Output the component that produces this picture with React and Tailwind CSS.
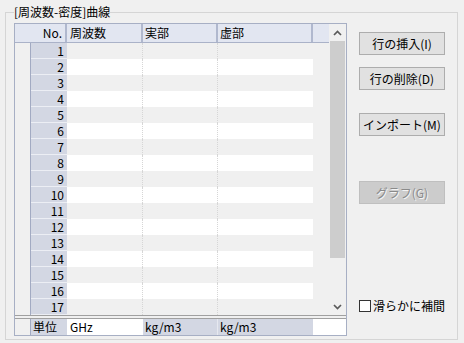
import React from "react";

const font = "font-['Noto_Sans_CJK_JP','Noto_Sans',sans-serif]";

function Up() {
  return (
    <svg width="9" height="6" viewBox="0 0 9 6">
      <path d="M1 5 L4.5 1.5 L8 5" stroke="#5a5a5a" strokeWidth="1.7" fill="none" />
    </svg>
  );
}
function Down() {
  return (
    <svg width="9" height="6" viewBox="0 0 9 6">
      <path d="M1 1 L4.5 4.5 L8 1" stroke="#5a5a5a" strokeWidth="1.7" fill="none" />
    </svg>
  );
}

function Row({ n }) {
  const bg = n % 2 === 1 ? "bg-[#f0f0f0]" : "bg-white";
  return (
    <div className="flex h-4 shrink-0">
      <div className="w-4 border-r border-[#a2aac2]" />
      <div className="w-[36px] bg-[#d3d7e3] border-b border-[#eceef4] text-right pr-[3px] text-[12px] leading-[15px] text-black">
        {n}
      </div>
      <div className={`w-[76px] border-r border-dotted border-[#d6d6d6] ${bg}`} />
      <div className={`w-[75px] border-r border-dotted border-[#d6d6d6] ${bg}`} />
      <div className={`w-[95px] ${bg}`} />
      <div className="w-4" />
    </div>
  );
}

function Btn({ children, disabled }) {
  return (
    <div
      className={
        disabled
          ? "w-[86px] h-[23px] border border-[#bfbfbf] bg-[#cccccc] flex items-center justify-center text-[12px] text-[#8a8a8a] [text-shadow:1px_1px_0_#f4f4f4]"
          : "w-[86px] h-[23px] border border-[#adadad] bg-[#e1e1e1] flex items-center justify-center text-[12px] text-black"
      }
    >
      {children}
    </div>
  );
}

export default function App() {
  const rows = Array.from({ length: 17 }, (_, i) => i + 1);
  return (
    <div className={`w-[464px] h-[343px] bg-[#f0f0f0] overflow-hidden ${font}`}>
      <div className="ml-[5px] mt-[12px] w-[453px] h-[328px] border border-[#d5d5d5] relative">
        <span className="absolute left-[8px] top-[-8px] bg-[#f0f0f0] text-[12px] leading-[14px] text-black">
          [周波数-密度]曲線
        </span>
        <div className="flex pt-[10px] pl-[8px]">
          {/* grid */}
          <div className="w-[333px] h-[313px] border border-[#a7afc4] flex flex-col bg-[#f0f0f0]">
            <div className="flex h-[291px]">
              <div className="w-[314px] flex flex-col">
                <div className="flex h-[19px] shrink-0 bg-[#e2e6f1] border-b border-[#aab2c8] text-[12px] leading-[18px] text-black">
                  <div className="w-[52px] border-r-2 border-[#b0b8ce] text-right pr-[3px]">No.</div>
                  <div className="w-[76px] border-r-2 border-[#b0b8ce] pl-[3px]">周波数</div>
                  <div className="w-[75px] border-r-2 border-[#b0b8ce] pl-[2px]">実部</div>
                  <div className="w-[95px] border-r-2 border-[#b0b8ce] pl-[2px]">虚部</div>
                  <div className="w-4" />
                </div>
                {rows.map((n) => (
                  <Row key={n} n={n} />
                ))}
              </div>
              <div className="w-[17px] flex flex-col bg-[#f0f0f0]">
                <div className="h-[17px] flex items-center justify-center">
                  <Up />
                </div>
                <div className="h-[217px] mx-[1px] bg-[#cdcdcd]" />
                <div className="flex-1" />
                <div className="h-[17px] flex items-center justify-center">
                  <Down />
                </div>
              </div>
            </div>
            <div className="h-[4px] border-t border-b border-[#a0a0a0] bg-[#f0f0f0]" />
            <div className="flex h-4 text-[12px] leading-[16px] text-black">
              <div className="w-4 border-r border-[#a2aac2]" />
              <div className="w-[36px] bg-[#d3d7e3] pl-[2px]">単位</div>
              <div className="w-[76px] bg-white pl-[3px]">GHz</div>
              <div className="w-[75px] bg-[#d3d7e3] border-r border-[#e6e8ef] pl-[2px]">kg/m3</div>
              <div className="w-[95px] bg-[#d3d7e3] pl-[2px]">kg/m3</div>
              <div className="flex-1 bg-white" />
            </div>
          </div>
          {/* buttons */}
          <div className="ml-[12px] mt-[9px] flex flex-col">
            <Btn>行の挿入(I)</Btn>
            <div className="h-[12px]" />
            <Btn>行の削除(D)</Btn>
            <div className="h-[23px]" />
            <Btn>インポート(M)</Btn>
            <div className="h-[45px]" />
            <Btn disabled>グラフ(G)</Btn>
            <div className="h-[95px]" />
            <div className="flex items-center gap-[2px] text-[12px] leading-[14px] text-black">
              <div className="w-[12px] h-[12px] border border-[#333333] bg-white" />
              <span>滑らかに補間</span>
            </div>
          </div>
        </div>
      </div>
    </div>
  );
}
